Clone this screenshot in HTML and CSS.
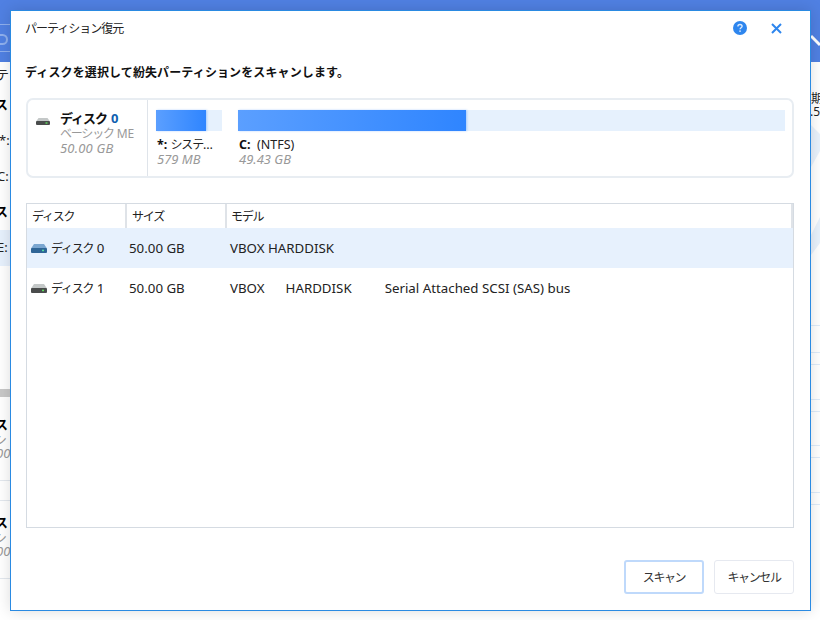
FILE: index.html
```html
<!DOCTYPE html>
<html lang="ja">
<head>
<meta charset="utf-8">
<title>パーティション復元</title>
<link rel="stylesheet" href="styles.css">
</head>
<body>
<div class="desktop">
  <div class="app-top"></div>
  <div class="app-line app-line-a"></div>
  <div class="app-line app-line-b"></div>
  <div class="app-pill"></div>
  <svg class="app-mark" width="9" height="14" viewBox="0 0 9 14"><path d="M0 2l9 9" stroke="#fff" stroke-width="3" fill="none"/></svg>
  <svg class="app-wash" width="9" height="140" viewBox="0 0 9 140"><path d="M0 0L9 9V26L0 42zM0 110L9 92V118L0 130z" fill="#e9f2fc"/></svg>
  <div class="frag f1">テ</div>
  <div class="frag f2 strong">ス</div>
  <div class="frag f3">*:</div>
  <div class="frag f4">C:</div>
  <div class="frag f5 strong">ス</div>
  <div class="frag-row"><span class="frag-in">E:</span></div>
  <div class="gray-bar"></div>
  <div class="frag f6 strong">ス</div>
  <div class="frag f7 sub">シ</div>
  <div class="frag f8 sub it">00</div>
  <div class="rule r1"></div>
  <div class="rule r2"></div>
  <div class="frag f9 strong">ス</div>
  <div class="frag f10 sub">シ</div>
  <div class="frag f11 sub it">00</div>
  <div class="rule r3"></div>
  <div class="frag f12">期</div>
  <div class="frag f13">.5!</div>
  <div class="rule-r rr1"></div><div class="rule-r rr2"></div><div class="rule-r rr3"></div>
  <div class="rule-r rr4"></div><div class="rule-r rr5"></div><div class="rule-r rr6"></div>
  <div class="rule-r rr7"></div><div class="rule-r rr8"></div><div class="rule-r rr9"></div>

  <section class="dialog">
    <header class="title-bar">
      <span class="title">パーティション復元</span>
      <div class="title-actions">
        <svg class="help" width="14" height="14" viewBox="0 0 14 14"><circle cx="7" cy="7" r="7" fill="#2e86ee"/><path d="M4.9 5.4C4.9 4.2 5.9 3.5 7 3.5s2.1.7 2.1 1.8c0 1.5-2 1.5-2 3" fill="none" stroke="#dbeafd" stroke-width="1.4"/><rect x="6.3" y="9.4" width="1.5" height="1.5" fill="#dbeafd"/></svg>
        <svg class="close" width="11" height="11" viewBox="0 0 11 11"><path d="M1 1l9 9M10 1l-9 9" stroke="#2e86ee" stroke-width="2" fill="none"/></svg>
      </div>
    </header>
    <h1 class="heading">ディスクを選択して紛失パーティションをスキャンします。</h1>

    <div class="card">
      <div class="card-disk">
        <svg class="hdd" width="14" height="7" viewBox="0 0 14 7"><path d="M2.5 0h9L14 3.5H0z" fill="#c4c8c8"/><rect y="3" width="14" height="4" rx="1" fill="#4a4c4c"/><rect x="9.5" y="4.3" width="2" height="1.4" fill="#5fe05f"/></svg>
        <div class="disk-text">
          <div class="disk-name"><span class="kana-b">ディスク</span><span class="zero">0</span></div>
          <div class="disk-sub"><span class="kana">ベーシック</span> ME</div>
          <div class="disk-size">50.00 GB</div>
        </div>
      </div>
      <div class="parts">
        <div class="part part-sys">
          <div class="bar"><div class="fill" style="width:76%"></div></div>
          <div class="part-name"><b class="drive">*:</b> <span class="kana">システ</span>…</div>
          <div class="part-size">579 MB</div>
        </div>
        <div class="part part-c">
          <div class="bar"><div class="fill" style="width:41.7%"></div></div>
          <div class="part-name"><b class="drive">C:</b> &nbsp;(NTFS)</div>
          <div class="part-size">49.43 GB</div>
        </div>
      </div>
    </div>

    <div class="table">
      <div class="thead">
        <div class="th th-disk"><span class="kana">ディスク</span></div>
        <div class="th th-size"><span class="kana">サイズ</span></div>
        <div class="th th-model"><span class="kana">モデル</span></div>
      </div>
      <div class="row selected">
        <div class="cell c-disk">
          <svg width="16" height="9" viewBox="0 0 16 9"><path d="M3 0h10l3 4.5H0z" fill="#7aa6d0"/><rect y="4" width="16" height="5" rx="1" fill="#2f6596"/><rect x="11" y="5.7" width="2" height="1.5" fill="#57e0a0"/></svg>
          <span><span class="kana">ディスク</span> 0</span>
        </div>
        <div class="cell c-size">50.00 GB</div>
        <div class="cell c-model">VBOX HARDDISK</div>
      </div>
      <div class="row">
        <div class="cell c-disk">
          <svg width="16" height="9" viewBox="0 0 16 9"><path d="M3 0h10l3 4.5H0z" fill="#c4c8c8"/><rect y="4" width="16" height="5" rx="1" fill="#4a4c4c"/><rect x="11" y="5.7" width="2" height="1.5" fill="#5fe05f"/></svg>
          <span><span class="kana">ディスク</span> 1</span>
        </div>
        <div class="cell c-size">50.00 GB</div>
        <div class="cell c-model"><span class="m1">VBOX</span><span class="m2">HARDDISK</span><span>Serial Attached SCSI (SAS) bus</span></div>
      </div>
    </div>

    <footer class="actions">
      <button class="btn btn-primary">スキャン</button>
      <button class="btn">キャンセル</button>
    </footer>
  </section>
</div>
</body>
</html>
```
FILE: styles.css
```css
* { box-sizing: border-box; }
html, body { margin: 0; padding: 0; }
body {
  width: 820px; height: 620px; overflow: hidden; background: #fff;
  font-family: "Noto Sans", "Noto Sans CJK JP", sans-serif;
  font-size: 12px; color: #222;
}
.desktop { position: relative; width: 820px; height: 620px; overflow: hidden; background: #fff; }
.app-top { position: absolute; left: 0; top: 0; width: 820px; height: 62px; background: #5080e2; }
.app-line { position: absolute; left: 0; width: 10px; height: 1px; background: #8fb0ee; }
.app-line-a { top: 24px; }
.app-line-b { top: 51px; }
.app-pill { position: absolute; left: -30px; top: 34px; width: 38px; height: 11px; border: 2px solid #8fb0ee; border-radius: 6px; }
.app-mark { position: absolute; left: 811px; top: 34px; }
.app-wash { position: absolute; left: 811px; top: 125px; }
.frag { position: absolute; left: -4px; line-height: 16px; color: #222; font-size: 13px; white-space: nowrap; }
.strong { font-weight: 700; color: #000; left: -5px; }
.sub { color: #999; }
.it { font-style: italic; }
.f1 { top: 66px; }
.f2 { top: 96px; }
.f3 { top: 132px; left: -1px; }
.f4 { top: 168px; left: -3px; }
.f5 { top: 203px; }
.f6 { top: 416px; }
.f7 { top: 431px; left: -6px; }
.f8 { top: 445px; left: -4px; }
.f9 { top: 514px; }
.f10 { top: 529px; left: -6px; }
.f11 { top: 543px; left: -4px; }
.f12 { top: 91px; left: 811px; font-size: 12px; }
.f13 { top: 104px; left: 810px; font-size: 12px; }
.frag-row { position: absolute; left: 0; top: 230px; width: 10px; height: 36px; background: #e7f1fd; overflow: hidden; }
.frag-in { position: absolute; left: -3px; top: 9px; font-size: 13px; line-height: 16px; }
.gray-bar { position: absolute; left: 0; top: 389px; width: 10px; height: 8px; background: #c8c8c8; }
.rule { position: absolute; left: 0; width: 10px; height: 1px; background: #e3e8ee; }
.r1 { top: 480px; }
.r2 { top: 500px; }
.r3 { top: 578px; }
.rule-r { position: absolute; left: 811px; width: 9px; height: 1px; background: #deebf9; }
.rr1 { top: 325px; } .rr2 { top: 352px; } .rr3 { top: 364px; }
.rr4 { top: 399px; } .rr5 { top: 411px; } .rr6 { top: 445px; }
.rr7 { top: 457px; } .rr8 { top: 492px; } .rr9 { top: 504px; }

.dialog {
  position: absolute; left: 10px; top: 10px; width: 801px; height: 601px;
  background: #fff; border: 1px solid #2a8ae2;
  box-shadow: 0 0 14px rgba(0,0,0,.14);
  display: flex; flex-direction: column; padding: 0 16px 0 15px;
}
.kana { letter-spacing: -1.2px; font-size: 12px; }
.kana-b { letter-spacing: -1px; font-size: 13px; }
.title-bar { display: flex; align-items: center; justify-content: space-between; height: 32px; margin-right: -1px; padding-top: 2px; }
.title { font-size: 12px; letter-spacing: -1px; color: #222; margin-left: -1px; }
.title-actions { display: flex; align-items: center; gap: 24px; padding-right: 13px; }
.help, .close { display: block; }
.heading { margin: 21px 0 0 -1px; font-size: 12px; letter-spacing: .12px; line-height: 18px; font-weight: 700; color: #111; }
.card {
  margin: 16px 0 0 0; height: 80px; display: flex;
  border: 2px solid #e8edf2; border-radius: 7px;
}
.card-disk {
  width: 120px; border-right: 1px solid #dfe4ea; padding: 6px 0 0 8px;
  display: flex; align-items: flex-start; gap: 10px;
}
.hdd { margin-top: 12px; }
.disk-name { font-size: 13px; font-weight: 700; line-height: 17px; color: #111; margin-top: 4px; display: flex; gap: 4px; }
.zero { color: #0f5fb0; }
.disk-sub { font-size: 12px; line-height: 14px; color: #999; letter-spacing: -.1px; }
.disk-size { font-size: 13px; line-height: 14px; color: #999; letter-spacing: .2px; }
.disk-size, .part-size { font-style: italic; }
.parts { flex: 1; display: flex; padding: 10px 7px 0 8px; gap: 16px; }
.part-sys { width: 66px; flex: none; }
.part-c { flex: 1; }
.bar { height: 21px; background: #e6f1fd; }
.fill { height: 100%; background: linear-gradient(90deg, #5b9fff, #2f85ff); box-shadow: 1px 0 2px rgba(47,133,255,.35); }
.part-name { font-size: 12.5px; line-height: 15px; margin-top: 6px; white-space: nowrap; color: #222; padding-left: 1px; }
.part-size { font-size: 13px; line-height: 15px; color: #999; padding-left: 1px; }
.drive { font-weight: 700; color: #111; }

.table { margin-top: 25px; height: 325px; border: 1px solid #d5dbe2; }
.thead { display: flex; height: 24px; }
.th { height: 24px; line-height: 24px; padding-left: 5px; font-size: 13px; color: #222; border-right: 2px solid #dfe3e8; }
.th-disk { width: 100px; }
.th-size { width: 100px; }
.th-model { flex: 1; padding-left: 4px; }
.row { display: flex; align-items: center; height: 40px; font-size: 13.3px; color: #222; }
.selected { background: #e7f1fd; }
.cell { white-space: nowrap; }
.c-disk { width: 102px; padding-left: 4px; display: flex; align-items: center; gap: 4px; }
.c-size { width: 101px; }
.m1 { margin-right: 21px; }
.m2 { margin-right: 33px; }

.actions { margin-top: 32px; display: flex; justify-content: flex-end; gap: 10px; }
.btn {
  width: 80px; height: 34px; padding: 0; background: #fff;
  border: 1px solid #e6e9f0; border-radius: 3px;
  font: inherit; font-size: 12px; letter-spacing: -1.4px; color: #333;
}
.btn-primary { border: 2px solid #bfd9fb; }
```
